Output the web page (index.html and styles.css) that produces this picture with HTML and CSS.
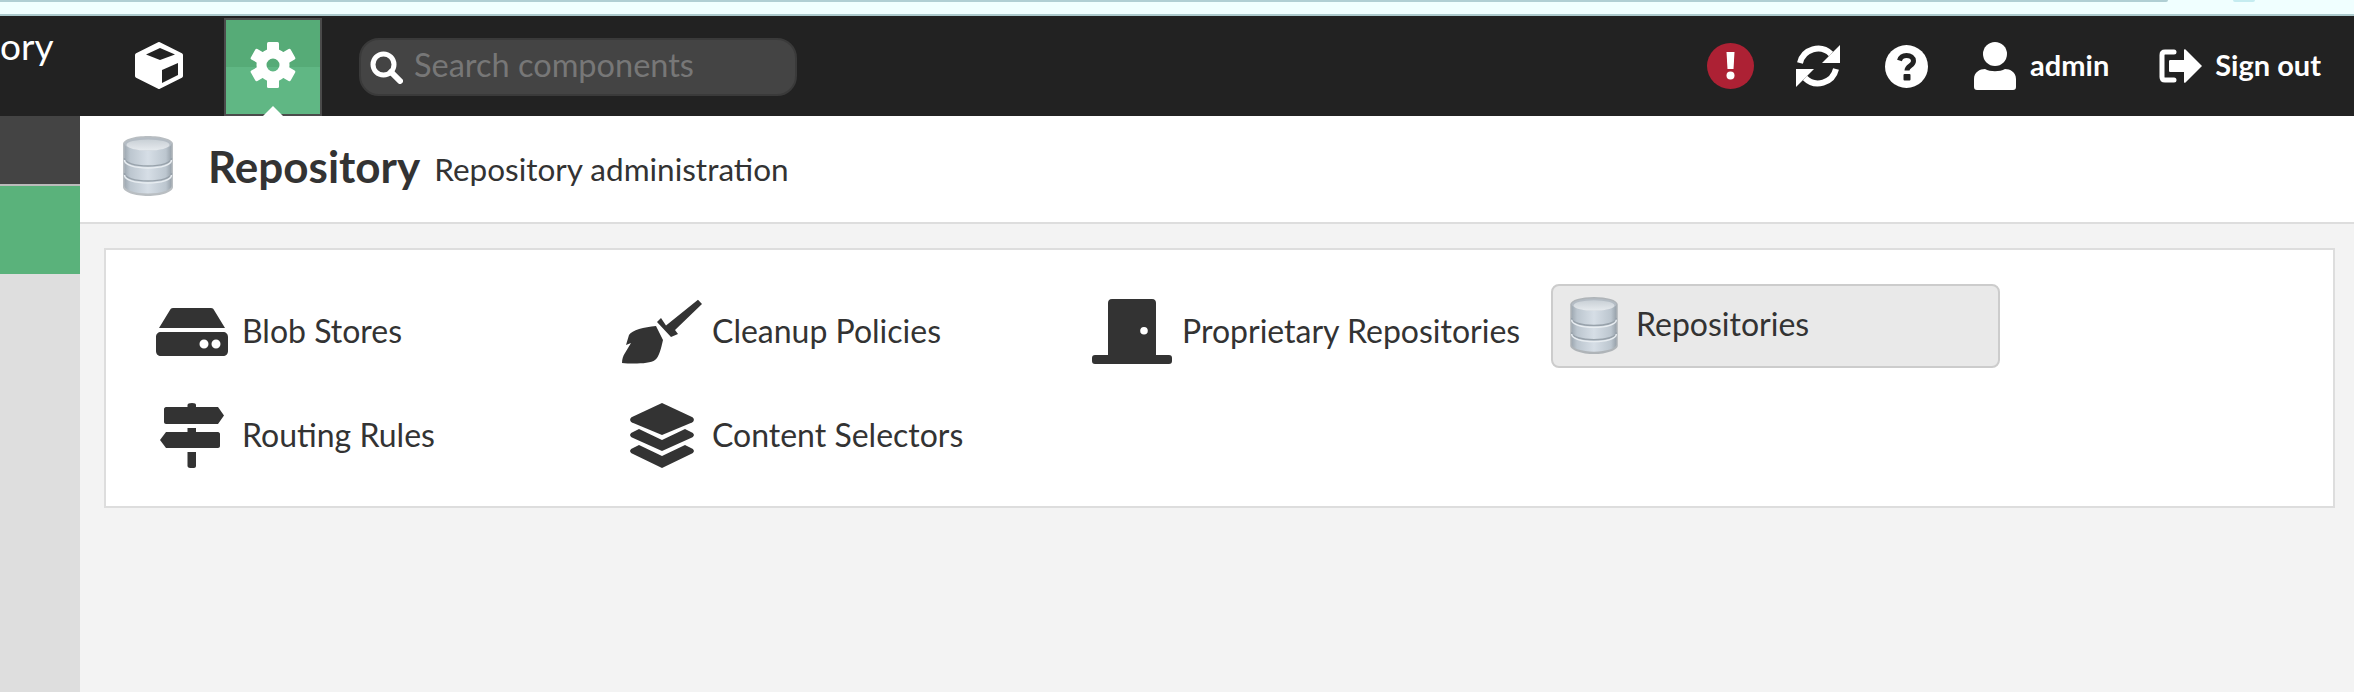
FILE: index.html
```html
<!DOCTYPE html>
<html lang="en">
<head>
    <meta charset="UTF-8">
    <title>Repository administration</title>
    <link rel="stylesheet" href="styles.css">
</head>
<body>
    <svg class="defs" width="0" height="0" aria-hidden="true">
        <defs>
            <linearGradient id="db-side" x1="0" y1="0" x2="1" y2="0">
                <stop offset="0" stop-color="#9fa9b2"/>
                <stop offset="0.12" stop-color="#bcc6cf"/>
                <stop offset="0.5" stop-color="#d6dee6"/>
                <stop offset="0.88" stop-color="#bcc6cf"/>
                <stop offset="1" stop-color="#98a2ab"/>
            </linearGradient>
            <linearGradient id="db-top" x1="0" y1="0" x2="0" y2="1">
                <stop offset="0" stop-color="#c9d0d6"/>
                <stop offset="1" stop-color="#e6eaee"/>
            </linearGradient>
            <symbol id="db-icon" viewBox="0 0 50 60">
                <path d="M0 8C0 3 12 0 25 0S50 3 50 8V51C50 56 38 60 25 60S0 56 0 51Z" fill="#7f8890" opacity=".55"/>
                <path d="M1.500 8V50C1.500 54 12 57.500 25 57.500S48.500 54 48.500 50V8Z" fill="url(#db-side)"/>
                <ellipse cx="25" cy="8" rx="23.500" ry="6.500" fill="#b4bcc4"/>
                <ellipse cx="25" cy="9" rx="21.500" ry="5.500" fill="url(#db-top)"/>
                <path d="M1.500 22C1.500 27 12 30 25 30S48.500 27 48.500 22" fill="none" stroke="#98a2ab" stroke-width="1.500"/>
                <path d="M1.500 24C1.500 29 12 32 25 32S48.500 29 48.500 24" fill="none" stroke="#e8edf1" stroke-width="1.500"/>
                <path d="M1.500 37C1.500 42 12 45 25 45S48.500 42 48.500 37" fill="none" stroke="#98a2ab" stroke-width="1.500"/>
                <path d="M1.500 39C1.500 44 12 47 25 47S48.500 44 48.500 39" fill="none" stroke="#e8edf1" stroke-width="1.500"/>
            </symbol>
        </defs>
    </svg>

    <div class="tab-strip">
        <div class="tab-strip-bar"></div>
        <div class="tab-strip-blob"></div>
    </div>

    <header class="topbar">
        <div class="brand">ory</div>
        <a class="mode-btn mode-btn-browse">
            <svg class="cube-icon" viewBox="0 0 48 47">
                <path d="M24 2 46 13V34L24 45 2 34V13Z" fill="#fff" stroke="#fff" stroke-width="4" stroke-linejoin="round"/>
                <path d="M25 6 40 12.500 25 18 11 12.500Z" fill="#222"/>
                <path d="M27 28 43 21V33L27 41Z" fill="#222"/>
            </svg>
        </a>
        <a class="mode-btn mode-btn-active">
            <svg class="gear-icon" viewBox="-23 -23 46 46">
                <circle r="11.500" fill="none" stroke="#fff" stroke-width="10"/>
                <g fill="#fff">
                    <rect x="-6" y="-23" width="12" height="10" rx="1.500"/>
                    <rect x="-6" y="-23" width="12" height="10" rx="1.500" transform="rotate(60)"/>
                    <rect x="-6" y="-23" width="12" height="10" rx="1.500" transform="rotate(120)"/>
                    <rect x="-6" y="-23" width="12" height="10" rx="1.500" transform="rotate(180)"/>
                    <rect x="-6" y="-23" width="12" height="10" rx="1.500" transform="rotate(240)"/>
                    <rect x="-6" y="-23" width="12" height="10" rx="1.500" transform="rotate(300)"/>
                </g>
            </svg>
        </a>
        <div class="search-box">
            <svg class="search-icon" viewBox="0 0 33 33">
                <circle cx="13.500" cy="13.500" r="10.500" fill="none" stroke="#fff" stroke-width="5"/>
                <path d="M21 21 30 30" stroke="#fff" stroke-width="6" stroke-linecap="round"/>
            </svg>
            <span class="search-text">Search components</span>
        </div>

        <div class="topbar-right">
            <svg class="tool-icon alert-icon" viewBox="0 0 47 46">
                <ellipse cx="23.500" cy="23" rx="23.500" ry="23" fill="#ad2134"/>
                <path d="M19.500 9h8l-1 17h-6z" fill="#fff"/>
                <circle cx="23.500" cy="32.500" r="4" fill="#fff"/>
            </svg>
            <svg class="tool-icon refresh-icon" viewBox="0 0 44 44">
                <path d="M4 19A18.500 18.500 0 0 1 35 10" fill="none" stroke="#fff" stroke-width="6"/>
                <path d="M44 1V19H26Z" fill="#fff"/>
                <path d="M40 25A18.500 18.500 0 0 1 9 34" fill="none" stroke="#fff" stroke-width="6"/>
                <path d="M0 43V25H18Z" fill="#fff"/>
            </svg>
            <svg class="tool-icon help-icon" viewBox="0 0 43 43">
                <circle cx="21.500" cy="21.500" r="21.500" fill="#fff"/>
                <path d="M14.500 15.500c1-3.500 3.500-5 7-5 4 0 7 2.300 7 5.500 0 4.800-6.500 4.600-6.500 9.500" fill="none" stroke="#222" stroke-width="5"/>
                <rect x="18.500" y="29" width="7" height="6.500" rx="1" fill="#222"/>
            </svg>
            <div class="user-link">
                <svg class="user-icon" viewBox="0 0 42 48">
                    <ellipse cx="21" cy="12" rx="12" ry="12" fill="#fff"/>
                    <path d="M0 37C0 30 6 27 11 27 16 30 26 30 31 27 36 27 42 30 42 37V45C42 47 41 48 39 48H3C1 48 0 47 0 45Z" fill="#fff"/>
                </svg>
                <span>admin</span>
            </div>
            <div class="signout-link">
                <svg class="signout-icon" viewBox="0 0 43 34">
                    <path d="M15 3H6C4 3 3 4 3 6V28C3 30 4 31 6 31H15" fill="none" stroke="#fff" stroke-width="5" stroke-linecap="round"/>
                    <path d="M11 11H25V1C25 0 26 0 26.500 .5L43 17 26.500 33.500C26 34 25 34 25 33V23H11C10 23 10 22 10 21V13C10 12 10 11 11 11Z" fill="#fff"/>
                </svg>
                <span>Sign out</span>
            </div>
        </div>
    </header>

    <div class="layout">
        <nav class="sidebar">
            <div class="side-head"></div>
            <div class="side-active"></div>
        </nav>
        <main class="main">
            <div class="page-head">
                <svg class="page-icon"><use href="#db-icon"/></svg>
                <h1>Repository</h1>
                <span class="page-sub">Repository administration</span>
            </div>
            <div class="panel">
                <div class="panel-grid">
                    <a class="tile">
                        <span class="tile-icon">
                            <svg class="icon-blob" viewBox="0 0 72 48" fill="#333">
                                <path d="M14 2C14.500 .8 15.500 0 17 0H55C56.500 0 57.500 .8 58 2L69 20H3Z"/>
                                <path fill-rule="evenodd" d="M5 24H67C70 24 72 26 72 29V43C72 46 70 48 67 48H5C2 48 0 46 0 43V29C0 26 2 24 5 24ZM48 31.500A4.500 4.500 0 1 0 48 40.500 4.500 4.500 0 1 0 48 31.500ZM60 31.500A4.500 4.500 0 1 0 60 40.500 4.500 4.500 0 1 0 60 31.500Z"/>
                            </svg>
                        </span>
                        <span>Blob Stores</span>
                    </a>
                    <a class="tile">
                        <span class="tile-icon">
                            <svg class="icon-broom" viewBox="0 0 80 65" fill="#333">
                                <path d="M76 .8 80 5 53 31 56 35 49 38 35 23 39 19 44 26.500Z"/>
                                <path d="M34 27 41 41C39 50 37 58 33 61 28 65 10 65 0 64 0 60 1 57 3 54L9 44 4 46 7 36C10 31 22 28 34 27Z"/>
                            </svg>
                        </span>
                        <span>Cleanup Policies</span>
                    </a>
                    <a class="tile">
                        <span class="tile-icon">
                            <svg class="icon-door" viewBox="0 0 80 65" fill="#333">
                                <path fill-rule="evenodd" d="M20 0H60C63 0 64 2 64 4V56H77C79 56 80 57 80 59V62C80 64 79 65 77 65H3C1 65 0 64 0 62V59C0 57 1 56 3 56H16V4C16 2 17 0 20 0ZM52 28A3.800 3.800 0 1 0 52 35.600 3.800 3.800 0 1 0 52 28Z"/>
                            </svg>
                        </span>
                        <span>Proprietary Repositories</span>
                    </a>
                    <a class="tile tile-selected">
                        <svg class="tile-selected-icon"><use href="#db-icon"/></svg>
                        <span>Repositories</span>
                    </a>
                    <a class="tile">
                        <span class="tile-icon">
                            <svg class="icon-sign" viewBox="0 0 64 65" fill="#333">
                                <path d="M27.500 2C27.500 .8 29 0 32 0S36 .8 36 2V4H58L64 12.500 58 21H6C5 21 4 20 4 19V6C4 5 5 4 6 4H27.500Z"/>
                                <path d="M27.500 25H36V29H58C59 29 60 30 60 31V43C60 44 59 45 58 45H6L0 37 6 29H27.500Z"/>
                                <path d="M27.500 49H36V63C36 64 35 65 34 65H30C29 65 27.500 64 27.500 63Z"/>
                            </svg>
                        </span>
                        <span>Routing Rules</span>
                    </a>
                    <a class="tile">
                        <span class="tile-icon">
                            <svg class="icon-layers" viewBox="0 0 64 65" fill="#333">
                                <path d="M32 0 62 14C64.500 15.500 64.500 18 62 19.500L32 32 2 19.500C-.5 18-.5 15.500 2 14Z"/>
                                <path d="M9 26 32 37 55 26 62 29.500C64.500 31 64.500 33 62 34.500L32 48 2 34.500C-.5 33-.5 31 2 29.500Z"/>
                                <path d="M9 42 32 53 55 42 62 45.500C64.500 47 64.500 49 62 50.500L32 65 2 50.500C-.5 49-.5 47 2 45.500Z"/>
                            </svg>
                        </span>
                        <span>Content Selectors</span>
                    </a>
                </div>
            </div>
        </main>
    </div>
</body>
</html>
```

FILE: styles.css
```css
html, body {
    margin: 0;
    padding: 0;
    height: 692px;
    overflow: hidden;
    background: #f3f3f3;
    color: #333;
    font-family: 'Lato', 'Open Sans', sans-serif;
}

.defs {
    display: block;
    height: 0;
}

/* Strip of browser chrome above the app */
.tab-strip {
    display: flex;
    align-items: flex-start;
    height: 14px;
    background: #f0ffff;
    border-bottom: 2px solid #abc9cc;
}

.tab-strip-bar {
    width: 2168px;
    height: 2px;
    background: #b0cfd4;
    border-radius: 0 0 6px 0;
}

.tab-strip-blob {
    width: 22px;
    height: 2px;
    margin-left: 65px;
    background: #c5ecf0;
    border-radius: 0 0 10px 10px;
}

/* Top bar */
.topbar {
    display: flex;
    align-items: stretch;
    height: 100px;
    background: #222;
    color: #fff;
}

.brand {
    width: 111px;
    padding-top: 10px;
    font-size: 37px;
    line-height: 40px;
    overflow: hidden;
}

.mode-btn {
    position: relative;
    display: flex;
    align-items: center;
    justify-content: center;
    box-sizing: border-box;
    width: 96px;
    height: 98px;
    margin-top: 2px;
    padding-bottom: 4px;
}

.mode-btn-browse {
    margin-right: 17px;
}

.mode-btn-active {
    width: 98px;
    border: 2px solid #4b4b4b;
    background: linear-gradient(#56ab77 50%, #60b784 50%);
}

/* notch pointing at the page below */
.mode-btn-active::after {
    content: '';
    position: absolute;
    left: 37px;
    bottom: -2px;
    border-left: 10px solid transparent;
    border-right: 10px solid transparent;
    border-bottom: 10px solid #fff;
}

.cube-icon {
    width: 48px;
    height: 47px;
}

.gear-icon {
    width: 46px;
    height: 46px;
}

.search-box {
    display: flex;
    align-items: center;
    gap: 11px;
    box-sizing: border-box;
    width: 438px;
    height: 58px;
    margin: 22px 0 0 37px;
    padding: 0 0 0 9px;
    background: #444;
    border: 2px solid #3a3a3a;
    border-radius: 20px;
}

.search-icon {
    width: 33px;
    height: 33px;
}

.search-text {
    color: #777;
    font-size: 32.500px;
    line-height: 36px;
    margin-top: -5px;
}

.topbar-right {
    display: flex;
    align-items: center;
    margin-left: auto;
    padding-right: 33px;
    font-weight: 700;
    font-size: 29px;
}

.tool-icon {
    display: block;
}

.alert-icon {
    width: 47px;
    height: 46px;
    margin-right: 42px;
}

.refresh-icon {
    width: 44px;
    height: 44px;
    margin-right: 45px;
}

.help-icon {
    width: 43px;
    height: 43px;
    margin-right: 46px;
}

.user-link,
.signout-link {
    display: flex;
    align-items: center;
}

.user-link span,
.signout-link span {
    margin-top: -4px;
}

.user-link {
    gap: 14px;
    margin-right: 50px;
}

.signout-link {
    gap: 13px;
}

.user-icon {
    width: 42px;
    height: 48px;
}

.signout-icon {
    width: 43px;
    height: 34px;
}

/* Page */
.layout {
    display: flex;
    height: 576px;
}

.sidebar {
    width: 80px;
    background: #dedede;
}

.side-head {
    height: 68px;
    background: #444;
    border-bottom: 2px solid #bbb;
}

.side-active {
    height: 88px;
    background: #5ab27b;
}

.main {
    flex: 1;
}

.page-head {
    display: flex;
    align-items: center;
    box-sizing: border-box;
    height: 108px;
    padding: 0 0 6px 43px;
    background: #fff;
    border-bottom: 2px solid #ddd;
}

.page-icon {
    width: 50px;
    height: 60px;
    margin-right: 35px;
}

.page-head h1 {
    margin: 0 14px 0 0;
    font-size: 44px;
    font-weight: 700;
}

.page-sub {
    padding-top: 6px;
    font-size: 31.500px;
}

.panel {
    box-sizing: border-box;
    height: 260px;
    margin: 24px 19px 0 24px;
    padding: 49px 0 0 46px;
    background: #fff;
    border: 2px solid #ddd;
}

.panel-grid {
    display: grid;
    grid-template-columns: repeat(4, 470px);
    grid-auto-rows: 65px;
    row-gap: 39px;
}

.tile {
    display: flex;
    align-items: center;
    gap: 10px;
    font-size: 32px;
    line-height: 40px;
}

.tile > span:last-child {
    margin-top: -2px;
}

.tile-icon {
    display: flex;
    justify-content: center;
    width: 80px;
}

.tile-icon svg {
    display: block;
}

.icon-blob {
    width: 72px;
    height: 48px;
}

.icon-broom,
.icon-door {
    width: 80px;
    height: 65px;
}

.icon-sign,
.icon-layers {
    width: 64px;
    height: 65px;
}

.tile-selected {
    align-self: start;
    gap: 18px;
    box-sizing: border-box;
    width: 449px;
    height: 84px;
    margin: -15px 0 0 -11px;
    padding: 0 0 2px 17px;
    background: #e9e9e9;
    border: 2px solid #ccc;
    border-radius: 8px;
}

.tile-selected-icon {
    width: 48px;
    height: 57px;
}
```
